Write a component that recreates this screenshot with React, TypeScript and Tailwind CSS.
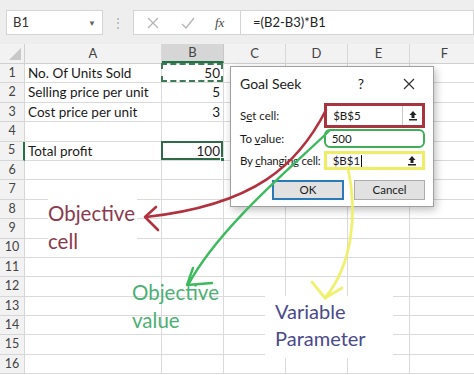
import React from 'react';

const COLS = [
  { key: 'A', w: 137 },
  { key: 'B', w: 62 },
  { key: 'C', w: 62 },
  { key: 'D', w: 62 },
  { key: 'E', w: 62 },
  { key: 'F', w: 70 },
];

const DATA: Record<number, [string, string]> = {
  1: ['No. Of Units Sold', '50'],
  2: ['Selling price per unit', '5'],
  3: ['Cost price per unit', '3'],
  5: ['Total profit', '100'],
};

const rows = Array.from({ length: 16 }, (_, i) => i + 1);

const UploadIcon = () => (
  <svg width="10" height="11" viewBox="0 0 10 11">
    <path d="M5 1 L1.5 5 H3.5 V8 H6.5 V5 H8.5 Z" fill="#222" />
    <rect x="1" y="9" width="8" height="1.5" fill="#222" />
  </svg>
);

const FormulaBar = () => (
  <div className="h-[44px] bg-[#eeeeee] flex items-start pt-[10px] pl-[6px]">
    <div className="w-[97px] h-[25px] bg-white border border-[#d4d4d4] flex items-center justify-between px-[6px] text-[13px] text-[#333]">
      <span>B1</span>
      <span className="text-[8px] text-[#666]">▼</span>
    </div>
    <div className="w-[30px] h-[25px] flex items-center justify-center text-[#aaa] text-[12px]">⋮</div>
    <div className="flex-1 h-[25px] bg-white border border-[#d4d4d4] flex items-center">
      <div className="w-[107px] h-full flex items-center border-r border-[#d4d4d4]">
        <svg width="14" height="14" viewBox="0 0 14 14" className="ml-[12px]">
          <path d="M2 2 L12 12 M12 2 L2 12" stroke="#b5b5b5" strokeWidth="1.3" />
        </svg>
        <svg width="16" height="14" viewBox="0 0 16 14" className="ml-[20px]">
          <path d="M2 8 L6 12 L14 2" stroke="#b5b5b5" strokeWidth="1.3" fill="none" />
        </svg>
        <span className="ml-[19px] italic text-[13px] text-[#444] font-['Liberation_Serif',serif]">fx</span>
      </div>
      <span className="ml-[12px] text-[13px] text-[#222]">=(B2-B3)*B1</span>
    </div>
  </div>
);

const HeaderRow = () => (
  <div className="flex h-[20px] bg-[#f2f2f2] border-b border-[#d0d0d0]">
    <div className="w-[25px] shrink-0 border-r border-[#d0d0d0] relative">
      <svg width="12" height="12" viewBox="0 0 12 12" className="absolute right-[3px] bottom-[3px]">
        <path d="M12 0 L12 12 L0 12 Z" fill="#c8c8c8" />
      </svg>
    </div>
    {COLS.map((c) => (
      <div
        key={c.key}
        style={{ width: c.w }}
        className={
          c.key === 'B'
            ? 'shrink-0 flex items-center justify-center text-[13px] bg-[#d6d6d6] text-[#444] border-r border-[#c8c8c8] border-b-2 border-b-[#217346]'
            : 'shrink-0 flex items-center justify-center text-[13px] text-[#444] border-r border-[#d8d8d8]'
        }
      >
        {c.key}
      </div>
    ))}
  </div>
);

const SheetRow = ({ n }: { n: number }) => {
  const d = DATA[n];
  return (
    <div className="flex h-[19.4px]">
      <div
        className={
          n === 5
            ? 'w-[25px] shrink-0 bg-[#f2f2f2] border-r-2 border-r-[#217346] border-b border-[#d6d6d6] flex items-center justify-center text-[12.5px] text-[#444]'
            : 'w-[25px] shrink-0 bg-[#f2f2f2] border-r border-[#d0d0d0] border-b border-[#d6d6d6] flex items-center justify-center text-[12.5px] text-[#444]'
        }
      >
        {n}
      </div>
      {COLS.map((c) => (
        <div
          key={c.key}
          style={{ width: c.w }}
          className="shrink-0 relative border-r border-b border-[#dadada] bg-white flex items-center text-[13.5px] text-[#1a1a1a] overflow-visible whitespace-nowrap"
        >
          {c.key === 'A' && d && <span className="pl-[3px]">{d[0]}</span>}
          {c.key === 'B' && d && <span className="ml-auto pr-[3px]">{d[1]}</span>}
          {c.key === 'B' && n === 1 && (
            <div className="absolute -left-[1px] -top-[1px] right-0 bottom-0 border-2 border-dashed border-[#3d7a55]" />
          )}
          {c.key === 'B' && n === 5 && (
            <div className="absolute -left-[1px] -top-[1px] right-0 bottom-0 border-2 border-[#2e6b47]">
              <div className="absolute -right-[4px] -bottom-[4px] w-[5px] h-[5px] bg-[#217346] border border-white" />
            </div>
          )}
        </div>
      ))}
    </div>
  );
};

const GoalSeek = () => (
  <div className="absolute left-[230px] top-[66px] w-[204px] h-[141px] bg-white border border-[#a0a0a0] shadow-[2px_3px_8px_rgba(0,0,0,0.25)] text-[11.5px] text-[#1a1a1a] px-[8px]">
    <div className="h-[33px] flex items-center">
      <span className="text-[14px] text-[#222] ml-[1px]">Goal Seek</span>
      <span className="ml-auto mr-[39px] text-[14px]">?</span>
      <svg width="12" height="12" viewBox="0 0 12 12" className="mr-[10px]">
        <path d="M1 1 L11 11 M11 1 L1 11" stroke="#333" strokeWidth="1.2" />
      </svg>
    </div>
    <div className="flex items-center h-[25px] mt-[3px]">
      <span className="w-[87px] ml-[1px]">S<span className="underline">e</span>t cell:</span>
      <div className="w-[104px] h-[25px] border-[3px] border-[#a83440] flex items-center bg-white">
        <div className="flex-1 h-full flex items-center pl-[6px]">$B$5</div>
        <div className="w-[20px] h-full border-l border-[#c8c8c8] flex items-center justify-center">
          <UploadIcon />
        </div>
      </div>
    </div>
    <div className="flex items-center h-[19px] mt-[1px]">
      <span className="w-[87px] ml-[1px]">To <span className="underline">v</span>alue:</span>
      <div className="w-[105px] h-[19px] border-[2.5px] border-[#3fae57] rounded-[6px] flex items-center pl-[6px] bg-white">500</div>
    </div>
    <div className="flex items-center h-[19px] mt-[3px]">
      <span className="w-[86px] ml-[1px] whitespace-nowrap tracking-[-0.2px]">By <span className="underline">c</span>hanging cell:</span>
      <div className="w-[104px] h-[19px] border-[3px] border-[#eeee66] flex items-center bg-white">
        <div className="flex-1 h-full flex items-center pl-[6px]">
          $B$1<span className="inline-block w-[1px] h-[12px] bg-[#111] ml-[1px]" />
        </div>
        <div className="w-[20px] h-full flex items-center justify-center">
          <UploadIcon />
        </div>
      </div>
    </div>
    <div className="flex justify-end gap-[10px] mt-[10px]">
      <div className="w-[72px] h-[20px] bg-[#e1e1e1] border-2 border-[#2a7ab8] flex items-center justify-center">OK</div>
      <div className="w-[71px] h-[20px] bg-[#e1e1e1] border border-[#adadad] flex items-center justify-center">Cancel</div>
    </div>
  </div>
);

const Arrows = () => (
  <svg width="474" height="375" viewBox="0 0 474 375" className="absolute left-0 top-0 pointer-events-none">
    <g fill="none" strokeLinecap="round" strokeLinejoin="round">
      <path d="M326 110 C 298 165, 255 205, 146 217" stroke="#b3313f" strokeWidth="2.6" />
      <path d="M156 207 L145 217 L158 230" stroke="#b3313f" strokeWidth="2.6" />
      <path d="M330 130 C 300 160, 220 225, 188 285" stroke="#3dba5e" strokeWidth="2.4" />
      <path d="M193 268 L187 285 L212 283" stroke="#3dba5e" strokeWidth="2.4" />
      <path d="M348 168 C 358 215, 352 265, 325 298" stroke="#eef060" strokeWidth="2.8" opacity="0.9" />
      <path d="M312 282 L325 298 L342 288" stroke="#eef060" strokeWidth="2.8" opacity="0.9" />
    </g>
  </svg>
);

export default function App() {
  return (
    <div className="relative w-[474px] h-[375px] overflow-hidden bg-white font-['Lato',sans-serif]">
      <FormulaBar />
      <HeaderRow />
      {rows.map((n) => (
        <SheetRow key={n} n={n} />
      ))}
      <GoalSeek />
      <div className="absolute left-[48px] top-[199px] bg-white leading-[28px] text-[20.5px] text-[#8c3a4c] pr-[2px]">
        Objective
        <br />
        cell
      </div>
      <div className="absolute left-[132px] top-[278px] leading-[28px] text-[20.5px] text-[#4cb074]">
        Objective
        <br />
        value
      </div>
      <div className="absolute left-[265px] top-[296px] w-[128px] h-[62px] bg-white pl-[10px] pt-[2px] leading-[27px] text-[20px] text-[#4a4a8c]">
        Variable
        <br />
        Parameter
      </div>
      <Arrows />
    </div>
  );
}
